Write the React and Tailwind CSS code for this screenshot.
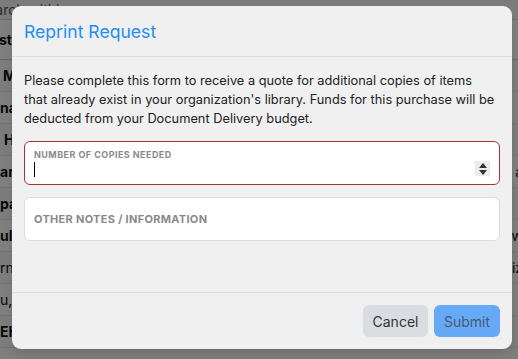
import React from "react";

const rows = [
  { l: "Marketing", r: "", bold: true, pl: "pl-[3px]" },
  { l: "nagement", r: "", bold: true, pl: "pl-0" },
  { l: "H.A. Smith", r: "", bold: true, pl: "pl-[4px]" },
  { l: "ard", r: "a", bold: true, pl: "pl-0" },
  { l: "pages", r: "", bold: true, pl: "pl-0" },
  { l: "ull", r: "ew", bold: true, pl: "pl-0" },
  { l: "rn", r: "iz", bold: false, pl: "pl-0" },
  { l: "u, L", r: "", bold: false, pl: "pl-0" },
  { l: "EHA", r: "", bold: true, pl: "pl-0" },
  { l: "", r: "", bold: false, pl: "pl-0" },
];

export default function App() {
  return (
    <div
      className="relative w-[518px] h-[359px] overflow-hidden bg-white"
      style={{ fontFamily: "Inter, 'Noto Sans', sans-serif" }}
    >
      {/* background page */}
      <div className="flex flex-col text-[14px] text-[#111]">
        <div className="h-[20px] flex items-end border-b border-[#d4d4d4] bg-[#f6f6f6]">
          <span className="ml-[-22px] leading-[18px] text-[#555] whitespace-nowrap">Search within my papers</span>
        </div>
        <div className="h-[40px] flex items-center border-b border-[#ccc] font-bold">
          <span className="ml-[-1px]">st</span>
        </div>
        {rows.map((r, i) => (
          <div
            key={i}
            className={`h-[32px] flex items-center justify-between border-b border-[#e6e6e6] ${
              i % 2 === 0 ? "bg-[#fafafa]" : "bg-white"
            }`}
          >
            <span className={`${r.pl} whitespace-nowrap ${r.bold ? "font-bold" : ""}`}>{r.l}</span>
            <span className="mr-[-5px]">{r.r}</span>
          </div>
        ))}
      </div>

      {/* overlay */}
      <div className="absolute inset-0 bg-black/50" />

      {/* modal */}
      <div className="absolute left-[12px] top-[6px] w-[500px] h-[343px] bg-[#f0f0f0] rounded-[9px] shadow-lg flex flex-col">
        <div className="h-[51px] flex items-center px-[12px] pt-[2px] border-b border-[#dcdcdc]">
          <h2 className="text-[17.6px] leading-[22px] text-[#1f8ff2] font-normal">Reprint Request</h2>
        </div>
        <div className="flex-1 px-[12px] pt-[14px]">
          <p className="text-[12.8px] leading-[19px] text-[#222] whitespace-nowrap">
            <span className="block">Please complete this form to receive a quote for additional copies of items</span>
            <span className="block">that already exist in your organization's library. Funds for this purchase will be</span>
            <span className="block">deducted from your Document Delivery budget.</span>
          </p>
          <div className="mt-[13px] h-[44px] bg-white rounded-[6px] border border-[#a83232] relative">
            <div className="absolute left-[9px] top-[7px] text-[9px] leading-[11px] font-bold tracking-[0.45px] text-[#8a8a8a]">
              NUMBER OF COPIES NEEDED
            </div>
            <div className="absolute left-[9px] top-[20px] w-[1px] h-[15px] bg-black" />
            <div className="absolute right-[9px] top-[19px] w-[15px] h-[15px] bg-[#ececec] flex flex-col items-center justify-center gap-[2px]">
              <svg width="8" height="5" viewBox="0 0 8 5"><path d="M4 0 L8 5 L0 5 Z" fill="#333" /></svg>
              <svg width="8" height="5" viewBox="0 0 8 5"><path d="M0 0 L8 0 L4 5 Z" fill="#333" /></svg>
            </div>
          </div>
          <div className="mt-[12px] h-[44px] bg-white rounded-[6px] border border-[#dcdcdc] flex items-center px-[9px]">
            <span className="text-[11px] font-bold tracking-[0.3px] text-[#8a8a8a]">OTHER NOTES / INFORMATION</span>
          </div>
        </div>
        <div className="h-[57px] border-t border-[#dcdcdc] flex items-start justify-end gap-[6px] px-[12px] pt-[12px]">
          <button className="w-[65px] h-[32px] rounded-[6px] bg-[#d9dde1] text-[14px] text-[#333]">Cancel</button>
          <button className="w-[66px] h-[32px] rounded-[6px] bg-[#66aaf7] text-[14px] text-[#4b5870]">Submit</button>
        </div>
      </div>
    </div>
  );
}
